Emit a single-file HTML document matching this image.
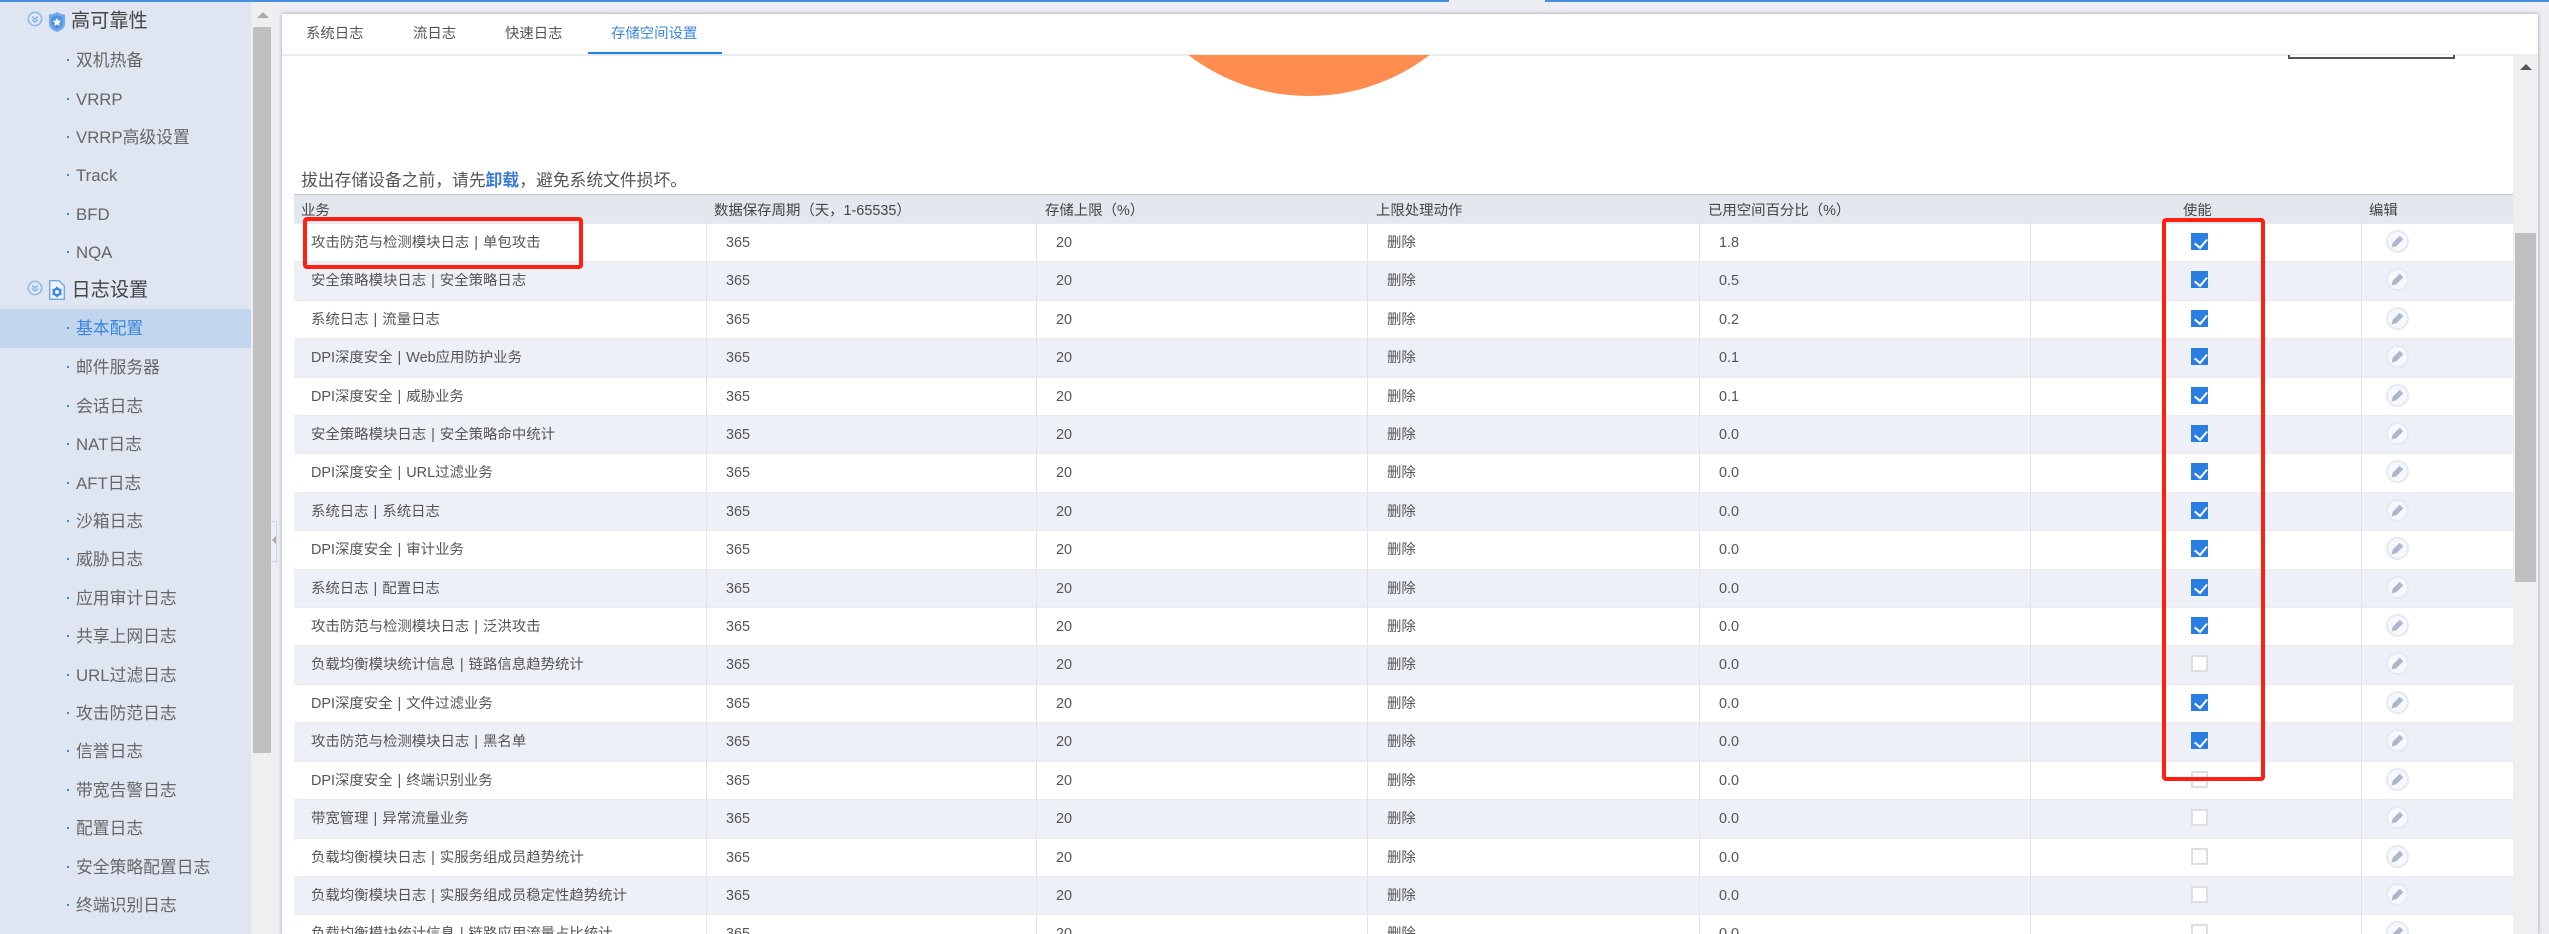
<!DOCTYPE html>
<html lang="zh"><head><meta charset="utf-8"><title>存储空间设置</title>
<style>
*{box-sizing:border-box}
html,body{margin:0;padding:0;width:2549px;height:934px;overflow:hidden;background:#eceef4;font-family:"Liberation Sans","Noto Sans CJK SC",sans-serif;color:#555}
.a{position:absolute}
#top1{left:0;top:0;width:1449px;height:2px;background:#4a8fdc}
#top2{left:1545px;top:0;width:1004px;height:2px;background:#4a8fdc}
#side{left:0;top:2px;width:251px;height:932px;background:#dfe5f1;overflow:hidden}
#side .m{position:absolute;left:0;width:251px;height:38.4px;line-height:40px;font-size:16.8px;color:#666;padding-left:76px;white-space:nowrap}
#side .m:before{content:"";position:absolute;left:67px;top:18px;width:2px;height:2px;background:#3a85e0}
#side .h{position:absolute;left:71px;height:38.4px;line-height:38.4px;font-size:19.2px;color:#444;white-space:nowrap}
#side .sel{background:#c1d5ec;color:#3a85e0}
#sb{left:251px;top:2px;width:20px;height:932px;background:#efefef}
#sbt{left:253px;top:27px;width:18px;height:726px;background:#bfbfbf}
#sba{left:257px;top:12px;width:0;height:0;border-left:6px solid transparent;border-right:6px solid transparent;border-bottom:6px solid #aaa}
#hd{left:271px;top:521px;width:6px;height:41px;border:1px solid #c9d3ea;border-left:none}
#hda{left:272px;top:536px;width:0;height:0;border-top:4px solid transparent;border-bottom:4px solid transparent;border-right:4px solid #a9a9a9}
#card{left:282px;top:14px;width:2256px;height:920px;background:#fff;box-shadow:0 0 4px rgba(0,0,0,.35);overflow:hidden}
#tabline{left:0;top:40px;width:2256px;height:1.5px;background:#e8edf2}
.tab{position:absolute;top:8px;height:24px;line-height:24px;font-size:14.4px;color:#555;white-space:nowrap}
#ul{left:306px;top:38px;width:134px;height:2px;background:#1d7fe8}
#circ{left:0;top:41px;width:2256px;height:879px;overflow:hidden}
#circ div{position:absolute;left:829px;top:-355px;width:396px;height:396px;border-radius:50%;background:#ff8d50}
#lg{left:2006px;top:41px;width:167px;height:4px;border:2px solid #555;border-top:none;background:#fff}
#note{left:19px;top:155px;height:24px;line-height:24px;font-size:16.8px;color:#555;white-space:nowrap}
#note b{color:#3a7bd5}
#tb{left:12px;top:180px;width:2219px;height:740px;overflow:hidden}
#th{height:29px;background:#e2e8ee;border-top:1.5px solid #c8c8c8;position:relative;font-size:14.4px;color:#444}
#th span{position:absolute;top:6px;line-height:20px;white-space:nowrap}
.r{height:38.42px;display:flex;background:#fff;font-size:14.4px;color:#555;box-shadow:inset 0 1px 0 #e9ebf0;word-spacing:1px}
.r:nth-child(even){background:#edf0f7}
.r i{font-style:normal;display:block;position:relative;height:100%;line-height:41px;border-right:1px solid #e3e3e3;padding-left:19px;white-space:nowrap;flex:none}
.r i:nth-child(1){width:413px;padding-left:17px}
.r i:nth-child(2){width:330px}
.r i:nth-child(3){width:331px}
.r i:nth-child(4){width:332px}
.r i:nth-child(5){width:331px}
.r i:nth-child(6){width:331px;padding:0}
.r i:last-child{width:151px;border:none;padding:0}
.k{position:absolute;left:160px;top:10px;width:17px;height:17px;background:#fff;border:2px solid #dedede}
.k.on{background:#2a7de1;border:none}
.k.on:after{content:"";position:absolute;left:6px;top:2.5px;width:5.5px;height:10px;border:solid #fff;border-width:0 2.6px 2.6px 0;transform:rotate(40deg)}
.p{position:absolute;left:23.5px;top:7px;width:23px;height:23px}
.rb{position:absolute;border:4px solid #ff2012;border-radius:4px}
#r1{left:303px;top:217px;width:280px;height:52px}
#r2{left:2162px;top:218px;width:103px;height:563px}
#vs{left:2231px;top:41px;width:25px;height:879px;background:#efefef}
#vsa{left:2238px;top:50px;width:0;height:0;border-left:6px solid transparent;border-right:6px solid transparent;border-bottom:6px solid #555}
#vst{left:2233px;top:219px;width:21px;height:349px;background:#bfbfbf}
</style></head>
<body>
<svg width="0" height="0" style="position:absolute"><defs>
<symbol id="p" viewBox="0 0 23 23"><circle cx="11.5" cy="11.5" r="10.5" fill="#f7f8fb" stroke="#e6e9f1" stroke-width="2"/><path d="M5.5 17.500l1.200-4.800 7-7 3.600 3.600-7 7z" fill="#aeb6cd"/></symbol>
<symbol id="cv" viewBox="0 0 16 16"><circle cx="8" cy="8" r="6.6" fill="#e4ebf6" stroke="#92bfee" stroke-width="1.800"/><path d="M5 5.600l3 2.400 3-2.400M5 8.600l3 2.400 3-2.400" fill="none" stroke="#7fb3ea" stroke-width="1.500"/></symbol>
</defs></svg>

<div class="a" id="top1"></div><div class="a" id="top2"></div>

<div class="a" id="side">
<svg class="a" style="left:27px;top:9px" width="16" height="16"><use href="#cv"/></svg>
<svg class="a" style="left:49px;top:10px" width="16" height="20" viewBox="0 0 16 20"><path d="M0 2.500Q4 2.500 8 0Q12 2.500 16 2.500V12Q16 17 8 20Q0 17 0 12z" fill="#71aae9"/><path d="M2.500 5Q6 4.500 8 3Q10 4.500 13.500 5V11.500Q13.500 15 8 17Q2.500 15 2.500 11.500z" fill="#4d93e2"/><path d="M8 5.800l1.300 2.700 3 .4-2.200 2 .6 3-2.700-1.500-2.700 1.500.6-3-2.200-2 3-.4z" fill="#fff"/></svg>
<div class="h" style="top:1px">高可靠性</div>
<div class="m" style="top:39.2px">双机热备</div>
<div class="m" style="top:77.6px">VRRP</div>
<div class="m" style="top:116px">VRRP高级设置</div>
<div class="m" style="top:154.4px">Track</div>
<div class="m" style="top:192.8px">BFD</div>
<div class="m" style="top:231.2px">NQA</div>
<svg class="a" style="left:27px;top:278px" width="16" height="16"><use href="#cv"/></svg>
<svg class="a" style="left:49px;top:278px" width="16" height="20" viewBox="0 0 16 20"><path d="M.7.700H10L15.300 6V19.300H.7z" fill="#eef3fb" stroke="#6ea8e8" stroke-width="1.400"/><circle cx="8" cy="12" r="3.200" fill="none" stroke="#3f8ae0" stroke-width="2.400"/><path d="M8 6.800V8.500M8 15.500V17.200M3.500 9.400L5 10.300M11 13.700L12.500 14.600M3.500 14.600L5 13.700M11 10.300L12.500 9.400" stroke="#3f8ae0" stroke-width="1.800"/></svg>
<div class="h" style="top:269.800px;left:71.500px">日志设置</div>
<div class="m sel" style="top:307.200px">基本配置</div>
<div class="m" style="top:346.400px">邮件服务器</div>
<div class="m" style="top:384.800px">会话日志</div>
<div class="m" style="top:423.200px">NAT日志</div>
<div class="m" style="top:461.600px">AFT日志</div>
<div class="m" style="top:500px">沙箱日志</div>
<div class="m" style="top:538.400px">威胁日志</div>
<div class="m" style="top:576.800px">应用审计日志</div>
<div class="m" style="top:615.200px">共享上网日志</div>
<div class="m" style="top:653.600px">URL过滤日志</div>
<div class="m" style="top:692px">攻击防范日志</div>
<div class="m" style="top:730.400px">信誉日志</div>
<div class="m" style="top:768.800px">带宽告警日志</div>
<div class="m" style="top:807.200px">配置日志</div>
<div class="m" style="top:845.600px">安全策略配置日志</div>
<div class="m" style="top:884px">终端识别日志</div>
</div>
<div class="a" id="sb"></div><div class="a" id="sbt"></div><div class="a" id="sba"></div>
<div class="a" id="hd"></div><div class="a" id="hda"></div>

<div class="a" id="card">
<div class="tab" style="left:24px">系统日志</div>
<div class="tab" style="left:131px">流日志</div>
<div class="tab" style="left:223px">快速日志</div>
<div class="tab" style="left:329px;color:#3a85e0">存储空间设置</div>
<div class="a" id="ul"></div>
<div class="a" id="tabline"></div>
<div class="a" id="circ"><div></div></div>
<div class="a" id="lg"></div>
<div class="a" id="note">拔出存储设备之前，请先<b>卸载</b>，避免系统文件损坏。</div>

<div class="a" id="tb">
<div id="th"><span style="left:7px">业务</span><span style="left:420px">数据保存周期（天，1-65535）</span><span style="left:751px">存储上限（%）</span><span style="left:1082px">上限处理动作</span><span style="left:1414px">已用空间百分比（%）</span><span style="left:1889px">使能</span><span style="left:2075px">编辑</span></div>
<div id="rows">
<div class="r"><i>攻击防范与检测模块日志 | 单包攻击</i><i>365</i><i>20</i><i>删除</i><i>1.8</i><i><u class="k on"></u></i><i><svg class="p"><use href="#p"/></svg></i></div>
<div class="r"><i>安全策略模块日志 | 安全策略日志</i><i>365</i><i>20</i><i>删除</i><i>0.5</i><i><u class="k on"></u></i><i><svg class="p"><use href="#p"/></svg></i></div>
<div class="r"><i>系统日志 | 流量日志</i><i>365</i><i>20</i><i>删除</i><i>0.2</i><i><u class="k on"></u></i><i><svg class="p"><use href="#p"/></svg></i></div>
<div class="r"><i>DPI深度安全 | Web应用防护业务</i><i>365</i><i>20</i><i>删除</i><i>0.1</i><i><u class="k on"></u></i><i><svg class="p"><use href="#p"/></svg></i></div>
<div class="r"><i>DPI深度安全 | 威胁业务</i><i>365</i><i>20</i><i>删除</i><i>0.1</i><i><u class="k on"></u></i><i><svg class="p"><use href="#p"/></svg></i></div>
<div class="r"><i>安全策略模块日志 | 安全策略命中统计</i><i>365</i><i>20</i><i>删除</i><i>0.0</i><i><u class="k on"></u></i><i><svg class="p"><use href="#p"/></svg></i></div>
<div class="r"><i>DPI深度安全 | URL过滤业务</i><i>365</i><i>20</i><i>删除</i><i>0.0</i><i><u class="k on"></u></i><i><svg class="p"><use href="#p"/></svg></i></div>
<div class="r"><i>系统日志 | 系统日志</i><i>365</i><i>20</i><i>删除</i><i>0.0</i><i><u class="k on"></u></i><i><svg class="p"><use href="#p"/></svg></i></div>
<div class="r"><i>DPI深度安全 | 审计业务</i><i>365</i><i>20</i><i>删除</i><i>0.0</i><i><u class="k on"></u></i><i><svg class="p"><use href="#p"/></svg></i></div>
<div class="r"><i>系统日志 | 配置日志</i><i>365</i><i>20</i><i>删除</i><i>0.0</i><i><u class="k on"></u></i><i><svg class="p"><use href="#p"/></svg></i></div>
<div class="r"><i>攻击防范与检测模块日志 | 泛洪攻击</i><i>365</i><i>20</i><i>删除</i><i>0.0</i><i><u class="k on"></u></i><i><svg class="p"><use href="#p"/></svg></i></div>
<div class="r"><i>负载均衡模块统计信息 | 链路信息趋势统计</i><i>365</i><i>20</i><i>删除</i><i>0.0</i><i><u class="k"></u></i><i><svg class="p"><use href="#p"/></svg></i></div>
<div class="r"><i>DPI深度安全 | 文件过滤业务</i><i>365</i><i>20</i><i>删除</i><i>0.0</i><i><u class="k on"></u></i><i><svg class="p"><use href="#p"/></svg></i></div>
<div class="r"><i>攻击防范与检测模块日志 | 黑名单</i><i>365</i><i>20</i><i>删除</i><i>0.0</i><i><u class="k on"></u></i><i><svg class="p"><use href="#p"/></svg></i></div>
<div class="r"><i>DPI深度安全 | 终端识别业务</i><i>365</i><i>20</i><i>删除</i><i>0.0</i><i><u class="k"></u></i><i><svg class="p"><use href="#p"/></svg></i></div>
<div class="r"><i>带宽管理 | 异常流量业务</i><i>365</i><i>20</i><i>删除</i><i>0.0</i><i><u class="k"></u></i><i><svg class="p"><use href="#p"/></svg></i></div>
<div class="r"><i>负载均衡模块日志 | 实服务组成员趋势统计</i><i>365</i><i>20</i><i>删除</i><i>0.0</i><i><u class="k"></u></i><i><svg class="p"><use href="#p"/></svg></i></div>
<div class="r"><i>负载均衡模块日志 | 实服务组成员稳定性趋势统计</i><i>365</i><i>20</i><i>删除</i><i>0.0</i><i><u class="k"></u></i><i><svg class="p"><use href="#p"/></svg></i></div>
<div class="r"><i>负载均衡模块统计信息 | 链路应用流量占比统计</i><i>365</i><i>20</i><i>删除</i><i>0.0</i><i><u class="k"></u></i><i><svg class="p"><use href="#p"/></svg></i></div>
</div>
</div>
<div class="a" id="vs"></div><div class="a" id="vsa"></div><div class="a" id="vst"></div>
</div>

<div class="rb" id="r1"></div>
<div class="rb" id="r2"></div>
</body></html>
